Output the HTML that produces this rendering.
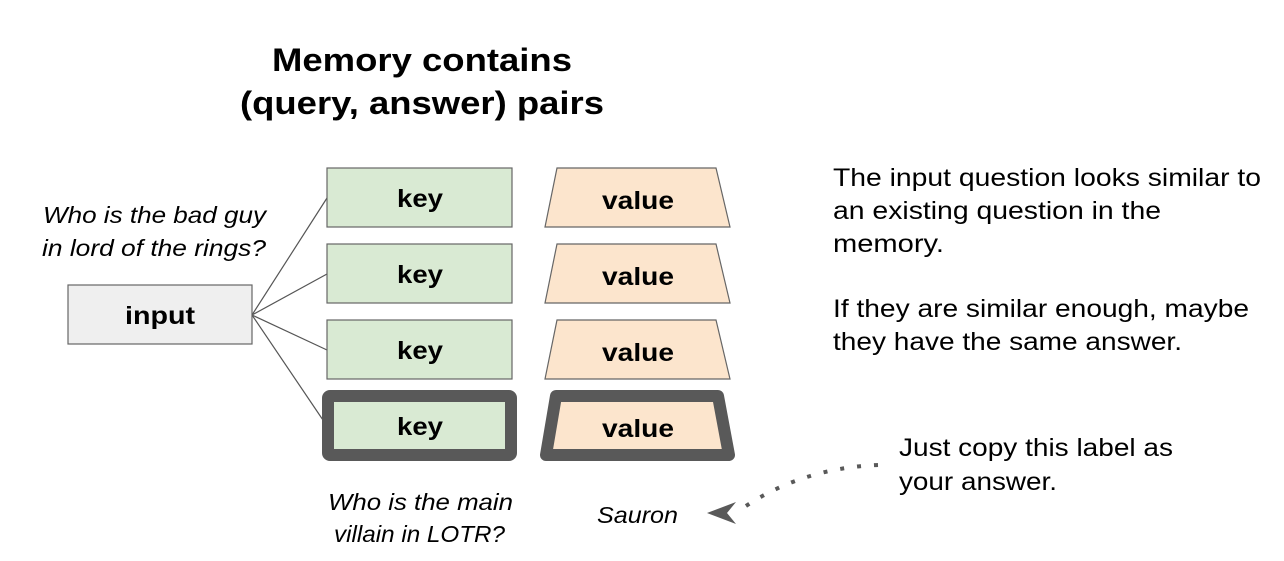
<!DOCTYPE html>
<html><head><style>
body{margin:0;background:#fff;}
svg{display:block;font-family:"Liberation Sans",sans-serif;}
</style></head><body>
<svg width="1284" height="561" viewBox="0 0 1284 561">
<g font-weight="bold" font-size="32" fill="#000" lengthAdjust="spacingAndGlyphs">
<text x="272" y="71" textLength="300" lengthAdjust="spacingAndGlyphs">Memory contains</text>
<text x="240" y="114" textLength="364" lengthAdjust="spacingAndGlyphs">(query, answer) pairs</text>
</g>
<g stroke="#555" stroke-width="1.2" fill="none">
<line x1="252" y1="315" x2="327" y2="198"/>
<line x1="252" y1="315" x2="327" y2="274"/>
<line x1="252" y1="315" x2="327" y2="350"/>
<line x1="252" y1="315" x2="327" y2="426"/>
</g>
<rect x="68" y="285" width="184" height="59" fill="#efefef" stroke="#666" stroke-width="1.2"/>
<text x="125" y="324" font-size="25" font-weight="bold" textLength="70" lengthAdjust="spacingAndGlyphs">input</text>
<g fill="#d9ead3" stroke="#666" stroke-width="1.2">
<rect x="327" y="168" width="185" height="59"/>
<rect x="327" y="244" width="185" height="59"/>
<rect x="327" y="320" width="185" height="59"/>
</g>
<rect x="328" y="396" width="183" height="59" fill="#d9ead3" stroke="#595959" stroke-width="12" rx="2"/>
<g fill="#fce5cd" stroke="#666" stroke-width="1.2">
<polygon points="557,168 716,168 730,227 545,227"/>
<polygon points="557,244 716,244 730,303 545,303"/>
<polygon points="557,320 716,320 730,379 545,379"/>
</g>
<polygon points="556,396 718,396 729,455 546,455" fill="#fce5cd" stroke="#595959" stroke-width="12" stroke-linejoin="round"/>
<g font-size="25" font-weight="bold">
<text x="397" y="207" textLength="46" lengthAdjust="spacingAndGlyphs">key</text>
<text x="397" y="283" textLength="46" lengthAdjust="spacingAndGlyphs">key</text>
<text x="397" y="359" textLength="46" lengthAdjust="spacingAndGlyphs">key</text>
<text x="397" y="435" textLength="46" lengthAdjust="spacingAndGlyphs">key</text>
<text x="602" y="209" textLength="72" lengthAdjust="spacingAndGlyphs">value</text>
<text x="602" y="285" textLength="72" lengthAdjust="spacingAndGlyphs">value</text>
<text x="602" y="361" textLength="72" lengthAdjust="spacingAndGlyphs">value</text>
<text x="602" y="437" textLength="72" lengthAdjust="spacingAndGlyphs">value</text>
</g>
<g font-size="23" font-style="italic">
<text x="43" y="223" textLength="223" lengthAdjust="spacingAndGlyphs">Who is the bad guy</text>
<text x="42" y="256" textLength="224" lengthAdjust="spacingAndGlyphs">in lord of the rings?</text>
<text x="328" y="510" textLength="185" lengthAdjust="spacingAndGlyphs">Who is the main</text>
<text x="334" y="542" textLength="171" lengthAdjust="spacingAndGlyphs">villain in LOTR?</text>
<text x="597" y="523" textLength="81" lengthAdjust="spacingAndGlyphs">Sauron</text>
</g>
<g font-size="25">
<text x="833" y="186" textLength="428" lengthAdjust="spacingAndGlyphs">The input question looks similar to</text>
<text x="833" y="219" textLength="328" lengthAdjust="spacingAndGlyphs">an existing question in the</text>
<text x="833" y="252" textLength="111" lengthAdjust="spacingAndGlyphs">memory.</text>
<text x="833" y="317" textLength="416" lengthAdjust="spacingAndGlyphs">If they are similar enough, maybe</text>
<text x="833" y="350" textLength="349" lengthAdjust="spacingAndGlyphs">they have the same answer.</text>
<text x="899" y="456" textLength="274" lengthAdjust="spacingAndGlyphs">Just copy this label as</text>
<text x="899" y="490" textLength="158" lengthAdjust="spacingAndGlyphs">your answer.</text>
</g>
<path d="M878,465 Q800,468 740,510" stroke="#595959" stroke-width="4" fill="none" stroke-dasharray="4,13"/>
<polygon points="707,513 736,502 727,513 736,524" fill="#595959"/>
</svg>
</body></html>
